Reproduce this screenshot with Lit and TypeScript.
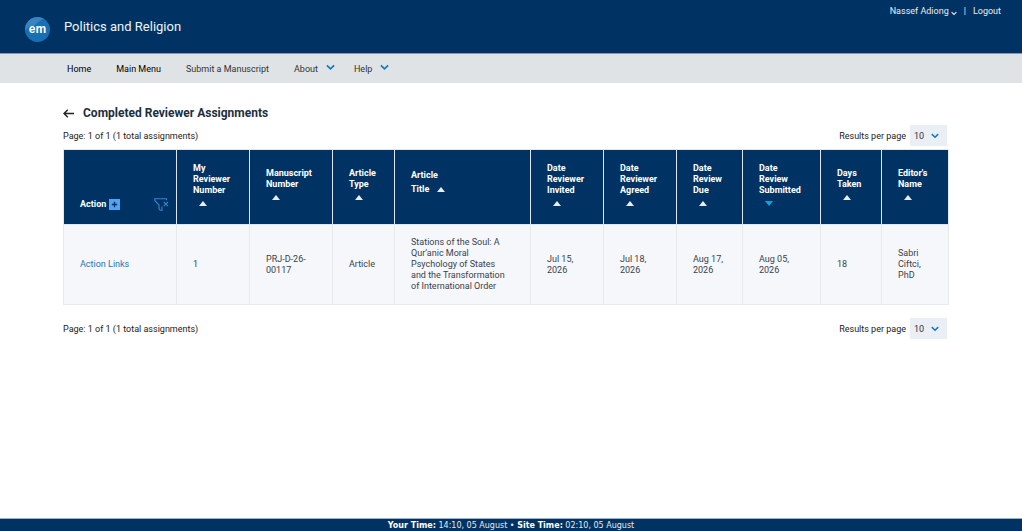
import { LitElement, html, css, svg } from "lit";
import { customElement, property } from "lit/decorators.js";

interface Column {
  lines: string[];
  width: number;
  sort: "up" | "down";
  inline?: boolean;
}

const columns: Column[] = [
  { lines: ["My", "Reviewer", "Number"], width: 73, sort: "up" },
  { lines: ["Manuscript", "Number"], width: 83, sort: "up" },
  { lines: ["Article", "Type"], width: 62, sort: "up" },
  { lines: ["Article", "Title"], width: 136, sort: "up", inline: true },
  { lines: ["Date", "Reviewer", "Invited"], width: 73, sort: "up" },
  { lines: ["Date", "Reviewer", "Agreed"], width: 73, sort: "up" },
  { lines: ["Date", "Review", "Due"], width: 66, sort: "up" },
  { lines: ["Date", "Review", "Submitted"], width: 78, sort: "down" },
  { lines: ["Days", "Taken"], width: 61, sort: "up" },
  { lines: ["Editor's", "Name"], width: 67, sort: "up" },
];

const row: string[][] = [
  ["1"],
  ["PRJ-D-26-", "00117"],
  ["Article"],
  ["Stations of the Soul: A", "Qur’anic Moral", "Psychology of States", "and the Transformation", "of International Order"],
  ["Jul 15,", "2026"],
  ["Jul 18,", "2026"],
  ["Aug 17,", "2026"],
  ["Aug 05,", "2026"],
  ["18"],
  ["Sabri", "Ciftci,", "PhD"],
];

const stack = (lines: string[]) => lines.map((l, i) => html`${i ? html`<br />` : ""}${l}`);

const chevron = html`<svg class="chevron" viewBox="0 0 8 6" aria-hidden="true">
  <path d="M0.8 1.1 L4 4.2 L7.2 1.1" fill="none" stroke="currentColor" stroke-width="1.5" />
</svg>`;

@customElement("results-bar")
export class ResultsBar extends LitElement {
  @property() name = "top";

  static styles = css`
    :host { display: flex; justify-content: space-between; align-items: center; height: 21px; padding-right: 2px; font-size: 9px; color: #222; }
    .size { display: flex; align-items: center; gap: 4px; }
    .box { display: grid; align-items: center; width: 37px; height: 21px; background: #eaeff6; }
    select { grid-area: 1 / 1; appearance: none; width: 100%; height: 21px; margin: 0; padding: 0 0 0 4px; border: 0; border-radius: 0; background: transparent; color: #333; font: inherit; }
    .chevron { grid-area: 1 / 1; justify-self: end; width: 8px; height: 6px; margin-right: 8px; color: #1379bd; pointer-events: none; }
  `;

  render() {
    const id = `size-${this.name}`;
    return html`
      <span>Page: 1 of 1 (1 total assignments)</span>
      <div class="size">
        <label for=${id}>Results per page</label>
        <div class="box">
          <select id=${id}><option>10</option><option>25</option><option>50</option></select>
          ${chevron}
        </div>
      </div>
    `;
  }
}

@customElement("app-root")
export class AppRoot extends LitElement {
  static styles = css`
    :host { display: flex; flex-direction: column; min-height: 100vh; background: #fff; font-family: Roboto, "Liberation Sans", sans-serif; font-size: 9px; color: #222; }
    a { color: inherit; text-decoration: none; }
    button { border: 0; padding: 0; margin: 0; background: none; font: inherit; color: inherit; text-align: left; cursor: pointer; }
    svg { display: block; }
    header { display: flex; justify-content: space-between; align-items: flex-start; height: 53px; padding: 0 21px 0 25px; background: #003363; border-bottom: 1px solid #7f9ab4; color: #fff; }
    .brand { display: flex; gap: 14px; padding-top: 17px; }
    .logo { width: 25px; height: 25px; }
    .journal { font-size: 13px; line-height: 20px; color: #f0f4f8; }
    .user { display: flex; gap: 7px; line-height: 12px; padding-top: 5px; color: #e8eef4; }
    .user button { display: flex; align-items: center; gap: 2px; }
    .user .chevron { width: 6px; height: 5px; margin-top: 4px; }
    nav { display: flex; align-items: center; gap: 25px; height: 29px; padding-left: 67px; background: #dfe3e6; color: #333; }
    nav .dark { color: #000; }
    nav button { display: flex; align-items: center; gap: 8px; }
    nav button + button { margin-left: -6px; }
    .chevron { width: 9px; height: 7px; }
    nav .chevron { color: #1379bd; margin-bottom: 2px; }
    main { flex: 1; padding: 22px 73px 22px 63px; }
    .heading { display: flex; align-items: center; gap: 9px; height: 16px; margin-bottom: 4px; }
    .back { width: 11px; height: 9px; }
    h1 { margin: 0; font-size: 12px; line-height: 18px; font-weight: 700; color: #1b2f40; }
    table { width: 100%; margin: 3px 0 13px; table-layout: fixed; border-collapse: collapse; line-height: 11px; }
    th, td { box-sizing: border-box; padding: 0 0 0 16px; text-align: left; vertical-align: middle; border: 1px solid #e6eaef; }
    th { height: 75px; padding-bottom: 6px; background: #003363; color: #fff; border-color: #dfe6ed; font-weight: 700; }
    td { height: 80px; background: #f5f7fb; color: #39424d; }
    th.action { vertical-align: bottom; padding: 0 7px 13px 16px; }
    .tools { display: flex; align-items: center; }
    .add { margin-left: 3px; }
    .clear { margin-left: auto; }
    .link { color: #1577b8; }
    .sort { display: block; }
    .mark { width: 8px; height: 5px; margin: 5px 0 0 6px; color: #e8edf2; }
    .down { color: #09a5df; }
    .row { display: flex; align-items: center; gap: 8px; height: 18px; }
    .row .mark { margin: 0; }
    footer { height: 12px; border-top: 1px solid #9fb2c5; background: #003363; color: #e3ebf2; font: 8px/14px "DejaVu Sans", sans-serif; text-align: center; overflow: hidden; }
    footer b { color: #fff; }
  `;

  private mark(dir: string) {
    return html`<svg class="mark ${dir}" viewBox="0 0 8 5" aria-hidden="true">
      ${dir === "up" ? svg`<path d="M0 5 L4 0 L8 5Z" fill="currentColor" />` : svg`<path d="M0 0 L4 5 L8 0Z" fill="currentColor" />`}
    </svg>`;
  }

  private head(c: Column) {
    return html`<th scope="col"><button class="sort">
      ${c.inline
        ? html`<span>${c.lines[0]}</span><span class="row">${c.lines[1]}${this.mark(c.sort)}</span>`
        : html`${stack(c.lines)}${this.mark(c.sort)}`}
    </button></th>`;
  }

  render() {
    return html`
      <header>
        <div class="brand">
          <svg class="logo" viewBox="0 0 25 25" role="img" aria-label="em">
            <defs><clipPath id="disc"><circle cx="12.5" cy="12.5" r="12.5" /></clipPath></defs>
            <circle cx="12.5" cy="12.5" r="12.5" fill="#1770b4" />
            <path clip-path="url(#disc)" d="M0 0H22Q13 4 9 9Q4 8 0 14Z" fill="#3b83be" />
            <text x="12.5" y="16" text-anchor="middle" font-family="Liberation Sans, sans-serif" font-weight="700" font-size="12" fill="#fff">em</text>
          </svg>
          <span class="journal">Politics and Religion</span>
        </div>
        <div class="user"><button>Nassef Adiong${chevron}</button><span>|</span><a href="#logout">Logout</a></div>
      </header>
      <nav>
        <a class="dark" href="#home">Home</a>
        <a class="dark" href="#menu">Main Menu</a>
        <a href="#submit">Submit a Manuscript</a>
        <button>About${chevron}</button>
        <button>Help${chevron}</button>
      </nav>
      <main>
        <div class="heading">
          <a href="#back" aria-label="Back"><svg class="back" viewBox="0 0 11 9"><path d="M11 4.5H1M4.8 0.8L1 4.5L4.8 8.2" fill="none" stroke="#222" stroke-width="1.4" /></svg></a>
          <h1>Completed Reviewer Assignments</h1>
        </div>
        <results-bar name="top"></results-bar>
        <table>
          <colgroup><col style="width:113px" />${columns.map((c) => html`<col style="width:${c.width}px" />`)}</colgroup>
          <thead><tr>
            <th scope="col" class="action"><div class="tools">
              <span>Action</span>
              <button class="add" aria-label="Expand"><svg width="11" height="11" viewBox="0 0 11 11"><rect width="11" height="11" fill="#53a3f5" /><path d="M5.5 2.8V8.2M2.8 5.5H8.2" stroke="#003363" stroke-width="1.4" /></svg></button>
              <button class="clear" aria-label="Clear filters"><svg width="15" height="13" viewBox="0 0 15 13" fill="none" stroke="#3b83cb" stroke-width="1.1"><path d="M12.5 2.2V0.7H0.8V2.5L5 7V10.5L6.2 12.3H8V8.5" /><path d="M9.8 4L14 8.2M14 4L9.8 8.2" /></svg></button>
            </div></th>
            ${columns.map((c) => this.head(c))}
          </tr></thead>
          <tbody><tr>
            <td><a class="link" href="#actions">Action Links</a></td>
            ${row.map((c) => html`<td>${stack(c)}</td>`)}
          </tr></tbody>
        </table>
        <results-bar name="bottom"></results-bar>
      </main>
      <footer><b>Your Time:</b> 14:10, 05 August • <b>Site Time:</b> 02:10, 05 August</footer>
    `;
  }
}
